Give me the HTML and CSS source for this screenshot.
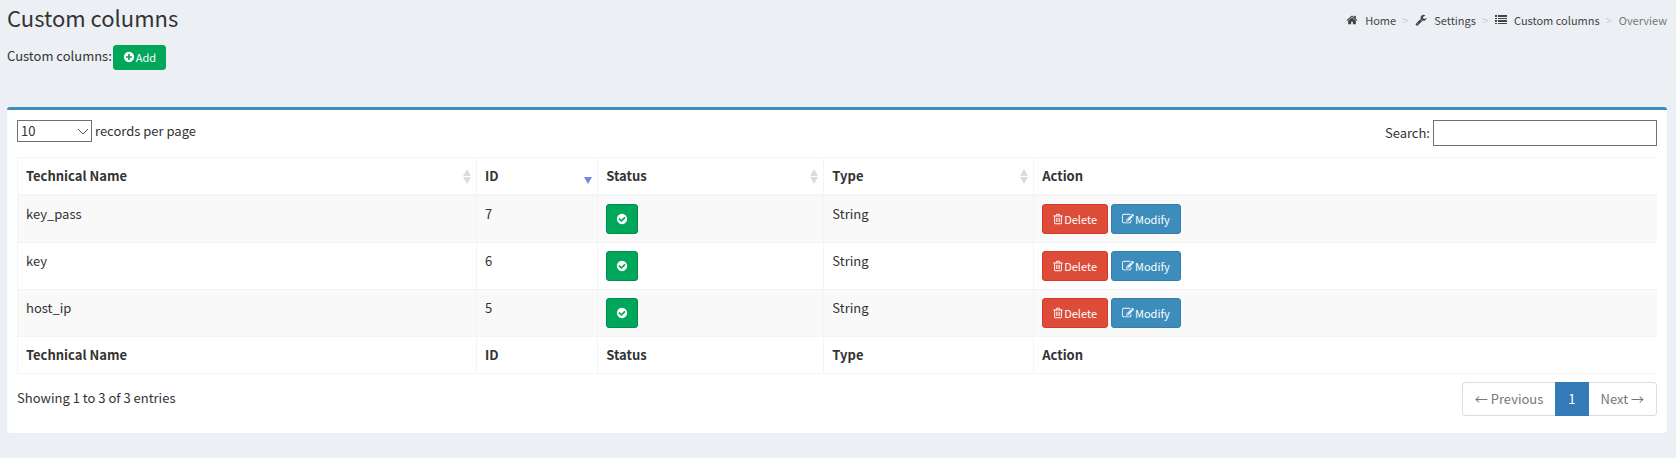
FILE: index.html
```html
<!DOCTYPE html>
<html lang="en">
<head>
<meta charset="utf-8">
<title>Custom columns</title>
<link rel="stylesheet" href="styles.css">
</head>
<body>
<svg class="sprite" aria-hidden="true">
  <symbol id="plus" viewBox="0 0 1792 1792"><path d="M1344 960v-128q0-26-19-45t-45-19h-256v-256q0-26-19-45t-45-19h-128q-26 0-45 19t-19 45v256h-256q-26 0-45 19t-19 45v128q0 26 19 45t45 19h256v256q0 26 19 45t45 19h128q26 0 45-19t19-45v-256h256q26 0 45-19t19-45zm320-64q0 209-103 385.5t-279.5 279.5-385.5 103-385.5-103-279.5-279.5-103-385.5 103-385.5 279.5-279.5 385.5-103 385.5 103 279.5 279.5 103 385.5z"/></symbol>
  <symbol id="check" viewBox="0 0 1792 1792"><path d="M1412 734q0-28-18-46l-91-90q-19-19-45-19t-45 19l-408 407-226-226q-19-19-45-19t-45 19l-91 90q-18 18-18 46 0 27 18 45l362 362q19 19 45 19 27 0 46-19l543-543q18-18 18-45zm252 162q0 209-103 385.5t-279.5 279.5-385.5 103-385.5-103-279.5-279.5-103-385.5 103-385.5 279.5-279.5 385.5-103 385.5 103 279.5 279.5 103 385.5z"/></symbol>
  <symbol id="home" viewBox="0 0 1792 1792"><path d="M1472 992v480q0 26-19 45t-45 19h-384v-384h-256v384h-384q-26 0-45-19t-19-45v-480q0-1 .5-3t.5-3l575-474 575 474q1 2 1 6zm223-69l-62 74q-8 9-21 11h-3q-13 0-21-7l-692-577-692 577q-12 8-24 7-13-2-21-11l-62-74q-8-10-7-23.5t11-21.5l719-599q32-26 76-26t76 26l244 204v-195q0-14 9-23t23-9h192q14 0 23 9t9 23v408l219 182q10 8 11 21.5t-7 23.5z"/></symbol>
  <symbol id="wrench" viewBox="0 0 1792 1792"><path d="M448 1472q0-26-19-45t-45-19-45 19-19 45 19 45 45 19 45-19 19-45zm644-420l-682 682q-37 37-90 37-52 0-91-37l-106-108q-38-36-38-90 0-53 38-91l681-681q39 98 114.500 173.500t173.500 114.500zm634-435q0 39-23 106-47 134-164.500 217.500t-258.500 83.500q-185 0-316.500-131.500t-131.500-316.500 131.500-316.500 316.500-131.500q58 0 121.500 16.500t107.500 46.500q16 11 16 28t-16 28l-293 169v224l193 107q5-3 79-48.500t135.500-81 70.500-35.500q15 0 23.500 10t8.500 25z"/></symbol>
  <symbol id="list" viewBox="0 0 12 12"><path d="M0 1h2v2H0zM3 1h9v2H3zM0 4h2v1H0zM3 4h9v1H3zM0 6h2v2H0zM3 6h9v2H3zM0 9h2v1H0zM3 9h9v1H3z"/></symbol>
  <symbol id="trash" viewBox="192 0 1408 1792"><path d="M704 736v576q0 14-9 23t-23 9h-64q-14 0-23-9t-9-23v-576q0-14 9-23t23-9h64q14 0 23 9t9 23zm256 0v576q0 14-9 23t-23 9h-64q-14 0-23-9t-9-23v-576q0-14 9-23t23-9h64q14 0 23 9t9 23zm256 0v576q0 14-9 23t-23 9h-64q-14 0-23-9t-9-23v-576q0-14 9-23t23-9h64q14 0 23 9t9 23zm128 724v-948h-896v948q0 22 7 40.500t14.500 27 10.500 8.500h832q3 0 10.500-8.500t14.500-27 7-40.500zm-672-1076h448l-48-117q-7-9-17-11h-317q-10 2-17 11zm928 32v64q0 14-9 23t-23 9h-96v948q0 83-47 143.500t-113 60.500h-832q-66 0-113-58.500t-47-141.500v-952h-96q-14 0-23-9t-9-23v-64q0-14 9-23t23-9h309l70-167q15-37 54-63t79-26h320q40 0 79 26t54 63l70 167h309q14 0 23 9t9 23z"/></symbol>
  <symbol id="edit" viewBox="0 0 1792 1792"><path d="M888 1184l116-116-152-152-116 116v56h96v96h56zm440-720q-16-16-33 1l-350 350q-17 17-1 33t33-1l350-350q17-17 1-33zm80 594v190q0 119-84.500 203.500t-203.500 84.500h-832q-119 0-203.500-84.500t-84.500-203.500v-832q0-119 84.500-203.500t203.500-84.500h832q63 0 117 25 15 7 18 23 3 17-9 29l-49 49q-14 14-32 8-23-6-45-6h-832q-66 0-113 47t-47 113v832q0 66 47 113t113 47h832q66 0 113-47t47-113v-126q0-13 9-22l64-64q15-15 35-7t20 29zm-96-738l288 288-672 672h-288v-288zm444 132l-92 92-288-288 92-92q28-28 68-28t68 28l152 152q28 28 28 68t-28 68z"/></symbol>
  <symbol id="sort" viewBox="0 0 8 15"><path d="M4 0l4 7H0zM0 8h8l-4 7z"/></symbol>
  <symbol id="sort-desc" viewBox="0 0 8 15"><path d="M0 8h8l-4 7z"/></symbol>
</svg>

<header class="page-header">
  <h1 class="title">Custom columns</h1>
  <nav aria-label="Breadcrumb">
    <ol class="breadcrumb">
      <li><a href="#"><svg class="icon"><use href="#home"/></svg>Home</a></li>
      <li><a href="#"><svg class="icon"><use href="#wrench"/></svg>Settings</a></li>
      <li><a href="#"><svg class="icon"><use href="#list"/></svg>Custom columns</a></li>
      <li class="current">Overview</li>
    </ol>
  </nav>
</header>

<main>
  <div class="toolbar"><span>Custom columns:</span><button class="btn btn-add" type="button"><svg class="icon"><use href="#plus"/></svg>Add</button></div>
  <hr class="rule">
  <section class="box">
    <div class="controls">
      <div class="length">
        <span class="select-wrap">
          <select class="select" id="length"><option>10</option><option>25</option><option>50</option></select>
          <svg class="chevron" viewBox="0 0 12 8"><path d="M1 1l5 5 5-5" fill="none" stroke="#555"/></svg>
        </span>
        <label for="length">records per page</label>
      </div>
      <div class="search"><label for="search">Search:</label><input class="search-input" id="search" type="search"></div>
    </div>
    <table class="table">
      <colgroup><col class="col-name"><col class="col-id"><col class="col-status"><col class="col-type"><col></colgroup>
      <thead>
        <tr>
          <th scope="col"><div class="sortable">Technical Name<svg class="sort"><use href="#sort"/></svg></div></th>
          <th scope="col" aria-sort="descending"><div class="sortable">ID<svg class="sort sorted"><use href="#sort-desc"/></svg></div></th>
          <th scope="col"><div class="sortable">Status<svg class="sort"><use href="#sort"/></svg></div></th>
          <th scope="col"><div class="sortable">Type<svg class="sort"><use href="#sort"/></svg></div></th>
          <th scope="col">Action</th>
        </tr>
      </thead>
      <tbody>
        <tr>
          <td>key_pass</td><td>7</td>
          <td><button class="btn btn-success" type="button" aria-label="Enabled"><svg class="icon"><use href="#check"/></svg></button></td>
          <td>String</td>
          <td><div class="actions"><button class="btn btn-danger" type="button"><svg class="icon icon-narrow"><use href="#trash"/></svg>Delete</button><button class="btn btn-primary" type="button"><svg class="icon"><use href="#edit"/></svg>Modify</button></div></td>
        </tr>
        <tr>
          <td>key</td><td>6</td>
          <td><button class="btn btn-success" type="button" aria-label="Enabled"><svg class="icon"><use href="#check"/></svg></button></td>
          <td>String</td>
          <td><div class="actions"><button class="btn btn-danger" type="button"><svg class="icon icon-narrow"><use href="#trash"/></svg>Delete</button><button class="btn btn-primary" type="button"><svg class="icon"><use href="#edit"/></svg>Modify</button></div></td>
        </tr>
        <tr>
          <td>host_ip</td><td>5</td>
          <td><button class="btn btn-success" type="button" aria-label="Enabled"><svg class="icon"><use href="#check"/></svg></button></td>
          <td>String</td>
          <td><div class="actions"><button class="btn btn-danger" type="button"><svg class="icon icon-narrow"><use href="#trash"/></svg>Delete</button><button class="btn btn-primary" type="button"><svg class="icon"><use href="#edit"/></svg>Modify</button></div></td>
        </tr>
      </tbody>
      <tfoot>
        <tr><th>Technical Name</th><th>ID</th><th>Status</th><th>Type</th><th>Action</th></tr>
      </tfoot>
    </table>
    <div class="table-footer">
      <div class="info">Showing 1 to 3 of 3 entries</div>
      <nav class="pagination" aria-label="Pages">
        <a class="page" href="#">← Previous</a><a class="page active" href="#" aria-current="page">1</a><a class="page" href="#">Next →</a>
      </nav>
    </div>
  </section>
</main>
</body>
</html>
```
FILE: styles.css
```css
* { box-sizing: border-box; }

body {
  margin: 0;
  padding: 0 9px 0 7px;
  background: #ecf0f5;
  color: #333;
  font-family: "Source Sans Pro", "Noto Sans CJK SC", "Open Sans", sans-serif;
  font-size: 13px;
  line-height: 20px;
}

.sprite { display: none; }

.icon {
  width: 12px;
  height: 12px;
  fill: currentColor;
  flex: none;
}
.icon-narrow { width: 10px; }

.page-header {
  display: flex;
  justify-content: space-between;
  align-items: center;
  padding-top: 4px;
}

.title {
  margin: 0;
  font-size: 22px;
  line-height: 26px;
  font-weight: 400;
}

.breadcrumb {
  display: flex;
  margin: 0;
  padding: 6px 0 0;
  list-style: none;
  font-size: 11px;
}
.breadcrumb li { display: flex; }
.breadcrumb li + li::before {
  content: ">";
  padding: 0 7px 0 6px;
  color: #ccc;
}
.breadcrumb a {
  display: flex;
  align-items: center;
  gap: 7px;
  color: #444;
  text-decoration: none;
}
.breadcrumb .current { color: #777; }

.toolbar {
  display: flex;
  align-items: center;
  gap: 1px;
  padding-top: 15px;
}
.toolbar span { padding-bottom: 3px; }

.btn {
  display: inline-flex;
  align-items: center;
  justify-content: center;
  gap: 1px;
  height: 30px;
  padding: 0 10px;
  border: 1px solid;
  border-radius: 3px;
  color: #fff;
  font: inherit;
  font-size: 11px;
  line-height: 18px;
  cursor: pointer;
}
.btn-add {
  height: 25px;
  padding: 0 9px 2px;
  background: #00a65a;
  border-color: #00a65a;
}
.btn-success { width: 32px; padding: 0; background: #00a65a; border-color: #008d4c; }
.btn-danger { background: #dd4b39; border-color: #d73925; }
.btn-primary { background: #3c8dbc; border-color: #367fa9; }

.rule {
  margin: 18px 0;
  border: 0;
  border-top: 1px solid #eee;
}

.box {
  padding: 10px 10px 17px;
  background: #fff;
  border-top: 3px solid #3c8dbc;
  border-radius: 3px;
  box-shadow: 0 1px 1px rgba(0, 0, 0, 0.1);
}

.controls {
  display: flex;
  justify-content: space-between;
  align-items: flex-start;
  padding-bottom: 11px;
}
.length, .search { display: flex; align-items: center; gap: 3px; }

.select-wrap { position: relative; display: flex; }
.select {
  appearance: none;
  width: 75px;
  height: 22px;
  padding: 0 3px;
  border: 1px solid #707070;
  border-radius: 0;
  background: #fff;
  color: #333;
  font: inherit;
  line-height: 20px;
}
.chevron {
  position: absolute;
  top: 8px;
  right: 3px;
  width: 12px;
  height: 8px;
  pointer-events: none;
}
.search-input {
  width: 224px;
  height: 26px;
  border: 1px solid #707070;
  background: #fff;
  font: inherit;
}

.table {
  width: 100%;
  table-layout: fixed;
  border-collapse: separate;
  border-spacing: 0;
  border-top: 1px solid #f4f4f4;
  border-left: 1px solid #f4f4f4;
}
.col-name { width: 28%; }
.col-id { width: 7.4%; }
.col-status { width: 13.8%; }
.col-type { width: 12.8%; }

.table th, .table td {
  padding: 8px;
  border-right: 1px solid #f4f4f4;
  border-bottom: 1px solid #f4f4f4;
  text-align: left;
  vertical-align: top;
}
.table th { font-weight: 700; }
.table th:last-child, .table td:last-child { border-right: 0; }
.table thead th { border-bottom-width: 2px; }
.table tbody tr:nth-child(odd) { background: #f9f9f9; }
.table td .btn { vertical-align: top; }

.sortable { display: flex; justify-content: space-between; align-items: center; }
.sort { width: 8px; height: 15px; margin-right: -3px; fill: #dcdcdc; }
.sorted { fill: #7b82e0; }
.actions { display: flex; gap: 3px; }

.table-footer {
  display: flex;
  justify-content: space-between;
  align-items: flex-start;
  padding-top: 8px;
}
.info { padding-top: 6px; }
.pagination { display: flex; }
.page {
  padding: 6px 12px;
  border: 1px solid #ddd;
  color: #777;
  text-decoration: none;
}
.page:first-child { border-right: 0; border-radius: 4px 0 0 4px; }
.page:last-child { border-left: 0; border-radius: 0 4px 4px 0; }
.page.active { background: #337ab7; border-color: #337ab7; color: #fff; }
```
